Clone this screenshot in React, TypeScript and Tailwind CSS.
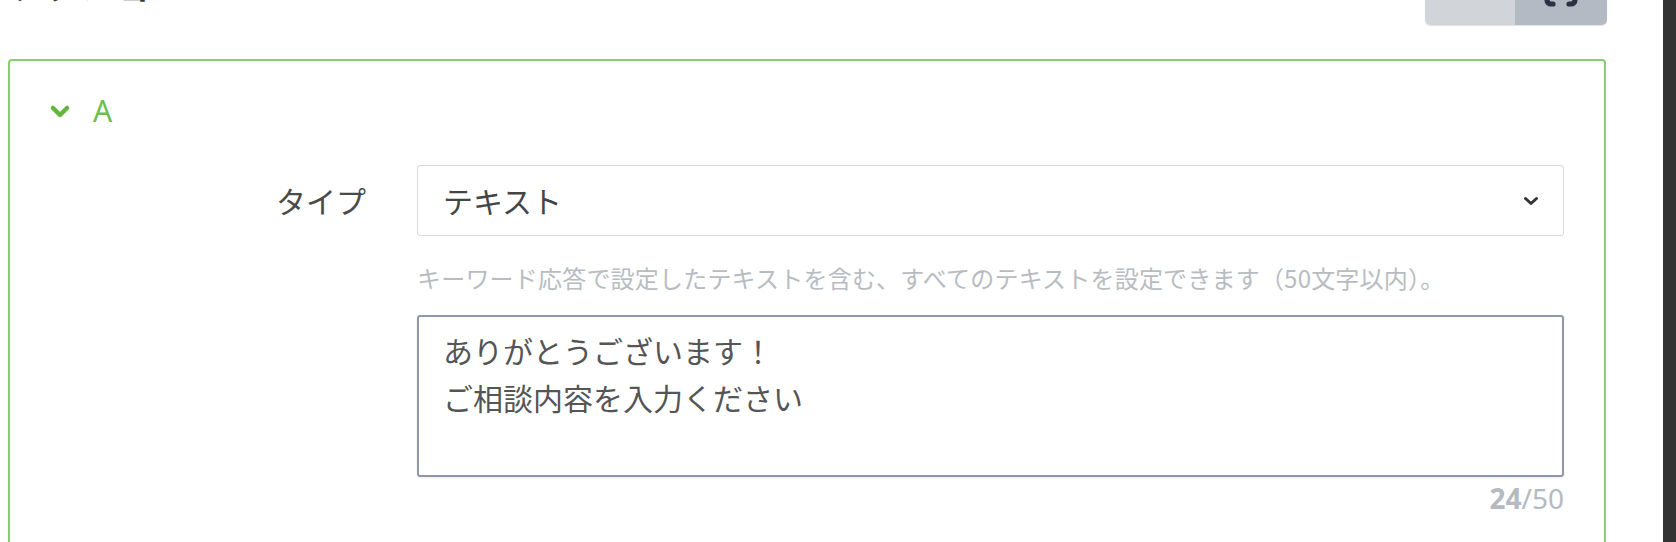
import React from "react";
import { Braces } from "lucide-react";

export default function App() {
  const font = {
    fontFamily: '"Noto Sans CJK JP", "Noto Sans", sans-serif',
  };
  return (
    <div
      className="w-[1676px] h-[542px] overflow-hidden flex bg-white"
      style={font}
    >
      <div className="w-[1663px] shrink-0 flex flex-col pl-[8px]">
        {/* header (cut off at the top) */}
        <div className="h-[59px] shrink-0 flex items-start">
          <div className="-mt-[37px] ml-[2px] text-[36px] leading-[40px] font-bold text-[#3a3a3a]">
            アクション
          </div>
          <div className="ml-auto mr-[56px] -mt-[30px] flex h-[55px] rounded-b-[5px] overflow-hidden shadow-[0_1px_1px_rgba(0,0,0,0.12)]">
            <div className="w-[90px] bg-[#d1d4d9]" />
            <div className="w-[92px] bg-[#b4bac4] flex items-end justify-center pb-[15px]">
              <Braces size={48} strokeWidth={2.6} color="#2d3142" />
            </div>
          </div>
        </div>

        {/* accordion box */}
        <div className="w-[1598px] h-[540px] shrink-0 border-2 border-[#86cf6f] rounded-[4px]">
          <div className="pt-[30px] pl-[40px] h-[70px] flex items-center">
            <div className="flex items-center h-[40px] gap-[23px]">
              <svg width="20" height="13" viewBox="0 0 20 13">
                <polyline
                  points="3,3 10,10 17,3"
                  fill="none"
                  stroke="#62b63e"
                  strokeWidth="4.5"
                  strokeLinecap="round"
                  strokeLinejoin="round"
                />
              </svg>
              <span
                className="text-[30px] leading-[40px] text-[#6cbf4b]"
                style={{ fontFamily: '"Noto Sans", sans-serif' }}
              >
                A
              </span>
            </div>
          </div>

          <div className="mt-[34px] flex">
            <div className="w-[356px] h-[71px] flex items-center justify-end text-[30px] text-[#4a4a4a]">
              タイプ
            </div>
            <div className="ml-[51px] flex-1 pr-[40px] flex flex-col">
              <div className="h-[71px] border border-[#d6d9de] rounded-[3px] flex items-center justify-between pl-[25px] pr-[24px] text-[30px] text-[#454545]">
                <span>テキスト</span>
                <svg width="16" height="10" viewBox="0 0 16 10">
                  <polyline
                    points="2.5,2.5 8,7.5 13.5,2.5"
                    fill="none"
                    stroke="#333333"
                    strokeWidth="3"
                    strokeLinecap="round"
                    strokeLinejoin="round"
                  />
                </svg>
              </div>
              <div className="mt-[26px] text-[24px] leading-[32px] tracking-[0.2px] text-[#b8bcc2] whitespace-nowrap">
                キーワード応答で設定したテキストを含む、すべてのテキストを設定できます（50文字以内）。
              </div>
              <textarea
                readOnly
                className="mt-[21px] block w-full h-[162px] resize-none border-2 border-[#9197aa] rounded-[3px] pl-[24px] pt-[10px] text-[30px] leading-[47px] text-[#555555] outline-none shadow-[0_1px_2px_rgba(0,0,0,0.08)]"
                style={font}
                defaultValue={"ありがとうございます！\nご相談内容を入力ください"}
              />
              <div
                className="mt-[5px] text-right text-[28px] leading-[32px] text-[#b5bac2]"
                style={{ fontFamily: '"Noto Sans", sans-serif' }}
              >
                <span className="font-bold">24</span>/50
              </div>
            </div>
          </div>
        </div>
      </div>
      <div className="w-[13px] shrink-0 bg-[#333333]" />
    </div>
  );
}
